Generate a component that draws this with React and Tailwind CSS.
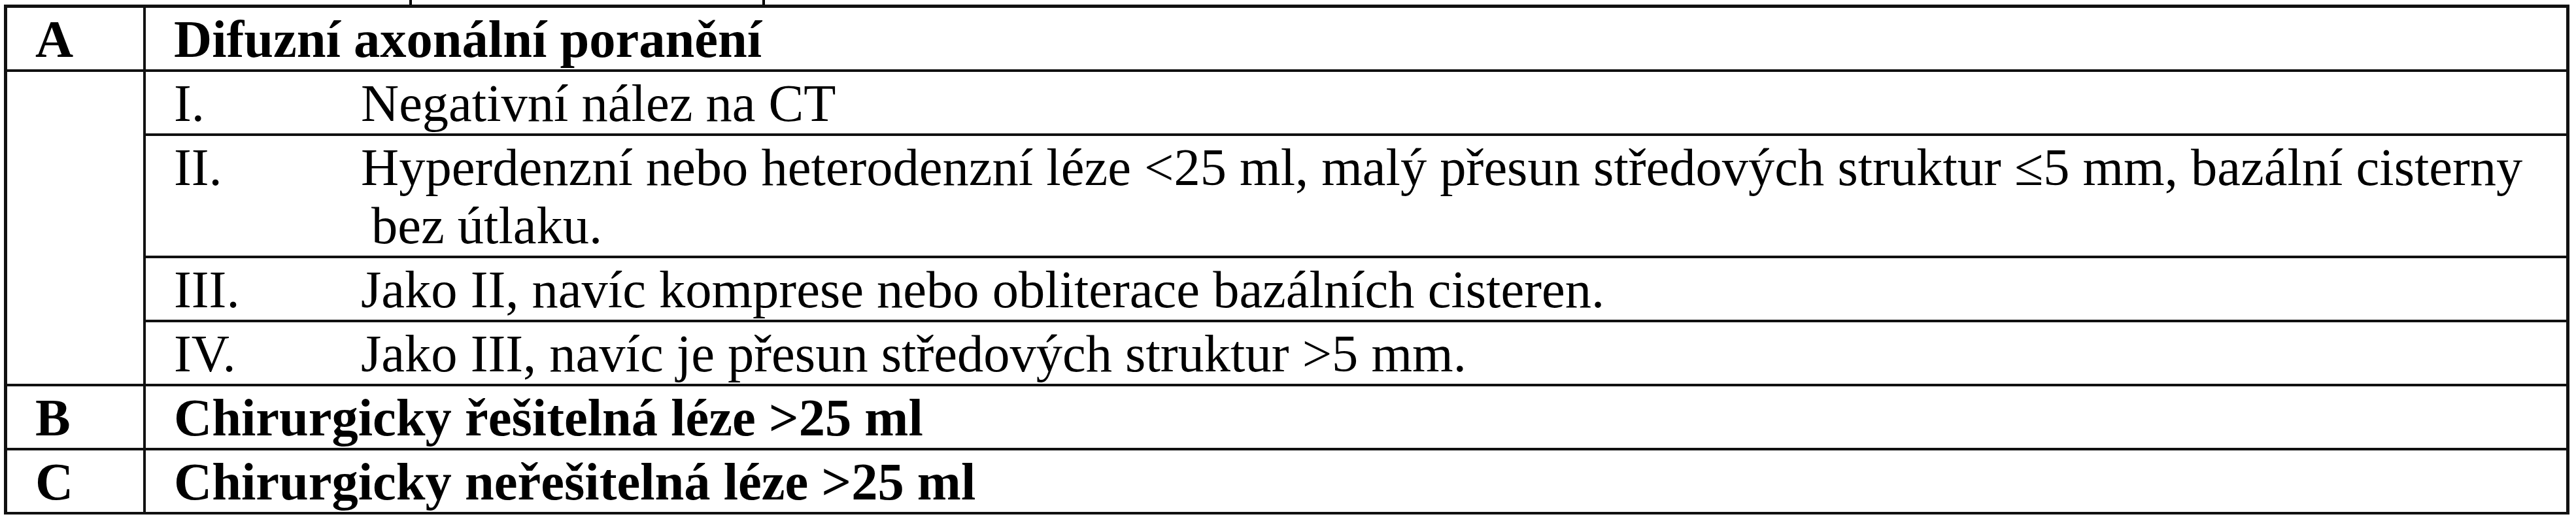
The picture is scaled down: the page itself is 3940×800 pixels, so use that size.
import React from 'react';

const grades = [
  { num: 'I.', lines: ['Negativní nález na CT'] },
  {
    num: 'II.',
    lines: [
      'Hyperdenzní nebo heterodenzní léze <25 ml, malý přesun středových struktur ≤5 mm, bazální cisterny',
      'bez útlaku.',
    ],
  },
  { num: 'III.', lines: ['Jako II, navíc komprese nebo obliterace bazálních cisteren.'] },
  { num: 'IV.', lines: ['Jako III, navíc je přesun středových struktur >5 mm.'] },
];

const Row = ({ letter, title }) => (
  <div className="flex border-b-4 border-[#111]">
    <div className="w-[212px] shrink-0 border-r-4 border-[#111] pl-[43px] pt-[3px] pb-[2px] font-bold">{letter}</div>
    <div className="flex-1 pl-[43px] pt-[3px] pb-[2px] font-bold">{title}</div>
  </div>
);

const App = () => {
  return (
    <div className="w-[3940px] h-[800px] bg-white text-black text-[80.5px] leading-[89px] font-['Liberation_Serif','Times_New_Roman',serif] whitespace-nowrap">
      {/* descender bits of the text above the table */}
      <div className="relative h-[7px]">
        <span className="absolute left-[626px] top-0 w-[4px] h-[7px] bg-black" />
        <span className="absolute left-[1166px] top-0 w-[4px] h-[7px] bg-black" />
      </div>

      <div className="ml-[6px] w-[3924px] border-x-[5px] border-t-[5px] border-[#111]">
        <Row letter="A" title="Difuzní axonální poranění" />

        <div className="flex border-b-4 border-[#111]">
          <div className="w-[212px] shrink-0 border-r-4 border-[#111]" />
          <div className="flex-1 flex flex-col">
            {grades.map((g, i) => (
              <div
                key={g.num}
                className={`flex pl-[43px] pt-[3px] pb-[2px] ${i < grades.length - 1 ? 'border-b-4 border-[#111]' : ''}`}
              >
                <div className="w-[286px] shrink-0">{g.num}</div>
                <div className="flex-1">
                  {g.lines[0]}
                  {g.lines[1] && (
                    <>
                      <br />
                      <span className="pl-[16px]">{g.lines[1]}</span>
                    </>
                  )}
                </div>
              </div>
            ))}
          </div>
        </div>

        <Row letter="B" title="Chirurgicky řešitelná léze >25 ml" />
        <Row letter="C" title="Chirurgicky neřešitelná léze >25 ml" />
      </div>
    </div>
  );
};

export default App;
